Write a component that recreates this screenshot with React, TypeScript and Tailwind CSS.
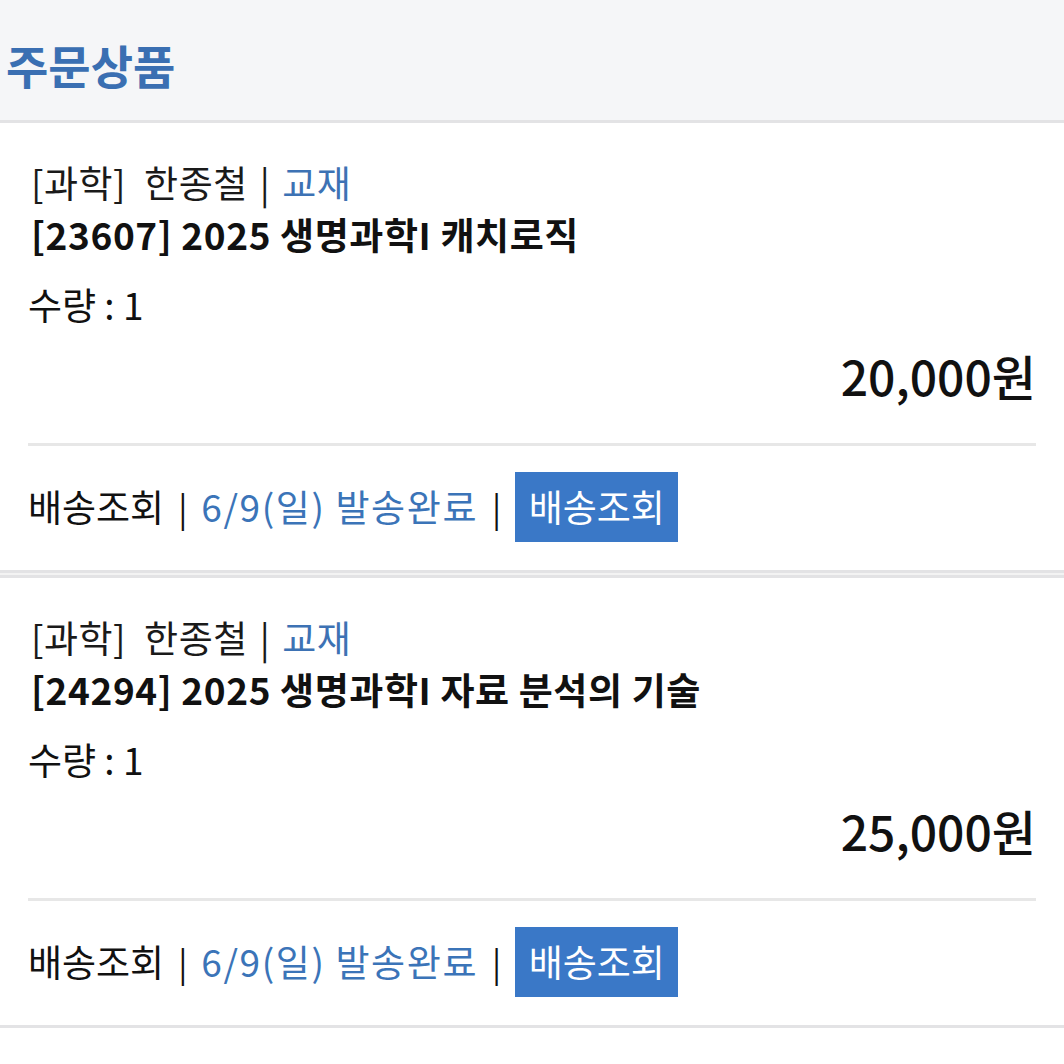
import React from "react";

const items = [
  { code: "23607", title: "2025 생명과학I 캐치로직", price: "20,000" },
  { code: "24294", title: "2025 생명과학I 자료 분석의 기술", price: "25,000" },
];

function Card({ code, title, price }: { code: string; title: string; price: string }) {
  return (
    <div className="bg-white border-y-[3px] border-[#e3e3e5] pl-[28px] pr-[28px] pt-[33px] pb-[28px]">
      <div className="text-[37px] leading-[52px] text-[#1a1a1a] pl-[3px] tracking-[0.5px]">
        [과학]<span className="ml-[18px]">한종철</span>
        <span className="mx-[12px]">|</span>
        <span className="text-[#3d72b4]">교재</span>
      </div>
      <div className="text-[37px] leading-[52px] font-bold text-[#111] pl-[3px] tracking-[0.6px]">
        [{code}] {title}
      </div>
      <div className="mt-[18px] text-[37px] leading-[52px] text-[#111]">수량 : 1</div>
      <div className="mt-[17px] text-right text-[48px] leading-[56px] font-medium text-[#111]">
        {price}원
      </div>
      <div className="mt-[40px] h-[3px] bg-[#e7e7e7]" />
      <div className="mt-[26px] flex items-center h-[70px] text-[37px] text-[#111]">
        <span>배송조회</span>
        <span className="mx-[14px] text-[34px]">|</span>
        <span className="text-[#3b74b8] tracking-[1.6px]">6/9(일) 발송완료</span>
        <span className="mx-[14px] text-[34px]">|</span>
        <button className="h-[70px] w-[163px] bg-[#3a78c7] text-white text-[37px] flex items-center justify-center">
          배송조회
        </button>
      </div>
    </div>
  );
}

export default function App() {
  return (
    <div
      className="w-[1064px] h-[1064px] bg-white overflow-hidden"
      style={{ fontFamily: '"Noto Sans CJK KR", "Noto Sans", sans-serif' }}
    >
      <div className="h-[123px] bg-[#f5f6f8] border-b-[3px] border-[#e3e3e6] flex items-center pl-[6px]">
        <h1 className="text-[46px] font-bold text-[#3a6fb2] leading-none mt-[8px]">주문상품</h1>
      </div>
      <div className="flex flex-col gap-[2px] bg-[#f3f3f3] -mt-[3px]">
        {items.map((it) => (
          <Card key={it.code} {...it} />
        ))}
      </div>
    </div>
  );
}
